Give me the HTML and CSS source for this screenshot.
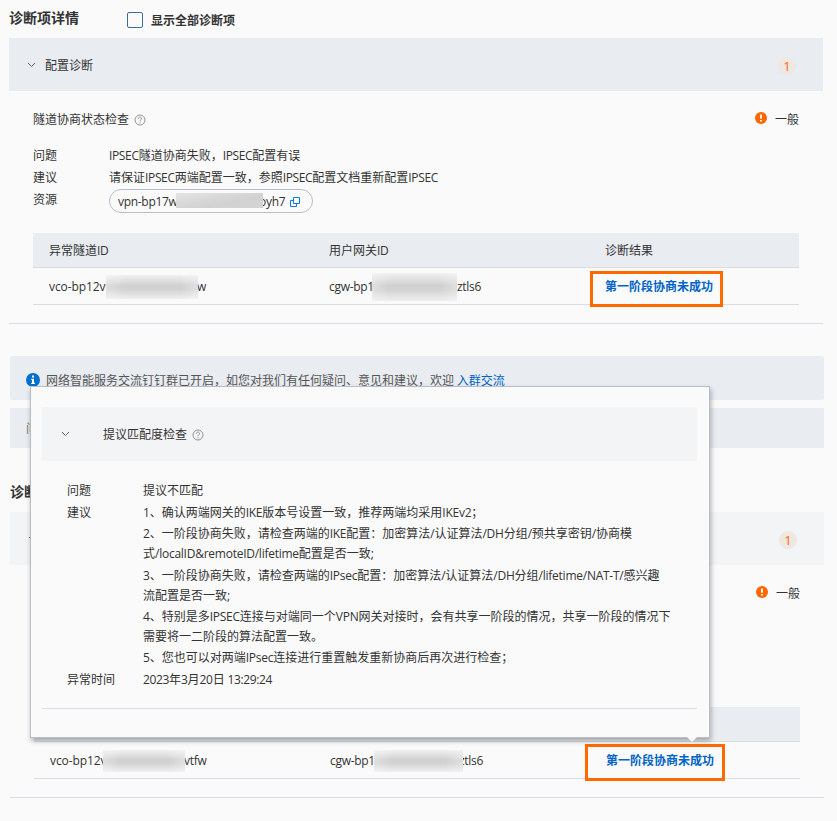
FILE: index.html
```html
<!DOCTYPE html>
<html lang="zh-CN">
<head>
<meta charset="utf-8">
<title>诊断项详情</title>
<link rel="stylesheet" href="styles.css">
</head>
<body>
<main class="page">
  <section class="diagnosis">
    <header class="heading">
      <h2>诊断项详情</h2>
      <label class="toggle"><span class="checkbox"></span>显示全部诊断项</label>
    </header>
    <div class="group-bar">
      <svg class="chevron" viewBox="0 0 9 6"><path d="M1 1l3.5 3.5L8 1"/></svg>
      <span>配置诊断</span>
      <span class="count">1</span>
    </div>
    <div class="check">
      <div class="check-title">
        <span>隧道协商状态检查</span>
        <svg class="help" viewBox="0 0 12 12"><circle cx="6" cy="6" r="5"/><path d="M4.4 4.8C4.4 2.6 7.6 2.6 7.6 4.7C7.6 5.8 6 5.8 6 7.2M6 8.2v1"/></svg>
        <span class="level"><svg class="warn" viewBox="0 0 12 12"><circle cx="6" cy="6" r="6"/><path d="M6 2.4v4.3M6 8v1.6"/></svg>一般</span>
      </div>
      <dl class="facts">
        <dt>问题</dt><dd><i>IPSEC</i>隧道协商失败，<i>IPSEC</i>配置有误</dd>
        <dt>建议</dt><dd>请保证<i>IPSEC</i>两端配置一致，参照<i>IPSEC</i>配置文档重新配置<i>IPSEC</i></dd>
        <dt>资源</dt>
        <dd><span class="pill"><span class="cut vpn">vpn-bp17w</span><span class="mask mask-vpn"></span><span class="tail tail-vpn">oyh7</span><svg class="copy" viewBox="0 0 10 10"><path d="M3.5 .5h6v6h-6zM3.5 3.5h-3v6h6v-3"/></svg></span></dd>
      </dl>
      <div class="table">
        <div class="row head"><span>异常隧道<i>ID</i></span><span>用户网关<i>ID</i></span><span>诊断结果</span></div>
        <div class="row">
          <span class="id"><span class="cut vco">vco-bp12v</span><span class="mask mask-vco"></span><span class="tail tail-vco">w</span></span>
          <span class="id"><span class="cut cgw">cgw-bp1</span><span class="mask mask-cgw"></span><span class="tail">ztls6</span></span>
          <span class="result"><a>第一阶段协商未成功</a><span class="marker"></span></span>
        </div>
      </div>
    </div>
  </section>

  <div class="alert">
    <svg class="info" viewBox="0 0 14 14"><circle cx="7" cy="7" r="7"/><path d="M6 2.6h2v2H6zM5.2 5.8H8v4h.9v1.3H5.2V9.8H6V7h-.8z"/></svg>
    <span>网络智能服务交流钉钉群已开启，如您对我们有任何疑问、意见和建议，欢迎 <a>入群交流</a></span>
  </div>
  <div class="question-bar">问</div>

  <section class="diagnosis second">
    <header class="heading"><h2>诊断</h2></header>
    <div class="group-bar">
      <svg class="chevron" viewBox="0 0 9 6"><path d="M1 1l3.5 3.5L8 1"/></svg>
      <span class="count">1</span>
    </div>
    <div class="check">
      <div class="check-title">
        <span class="level"><svg class="warn" viewBox="0 0 12 12"><circle cx="6" cy="6" r="6"/><path d="M6 2.4v4.3M6 8v1.6"/></svg>一般</span>
      </div>
      <div class="facts"></div>
      <div class="table">
        <div class="row head"></div>
        <div class="row">
          <span class="id"><span class="cut vco">vco-bp12v</span><span class="mask mask-vco"></span><span class="tail tail-vco">vtfw</span></span>
          <span class="id"><span class="cut cgw">cgw-bp1</span><span class="mask mask-cgw"></span><span class="tail tail-cgw">ztls6</span></span>
          <span class="result"><a>第一阶段协商未成功</a><span class="marker"></span></span>
        </div>
      </div>
    </div>
  </section>

  <aside class="popover">
    <div class="popover-title">
      <svg class="chevron" viewBox="0 0 9 6"><path d="M1 1l3.5 3.5L8 1"/></svg>
      <span>提议匹配度检查</span>
      <svg class="help" viewBox="0 0 12 12"><circle cx="6" cy="6" r="5"/><path d="M4.4 4.8C4.4 2.6 7.6 2.6 7.6 4.7C7.6 5.8 6 5.8 6 7.2M6 8.2v1"/></svg>
    </div>
    <dl class="facts">
      <dt>问题</dt><dd>提议不匹配</dd>
      <dt>建议</dt>
      <dd class="advice">
        <p><i>1</i>、确认两端网关的<i>IKE</i>版本号设置一致，推荐两端均采用<i>IKEv2</i>；</p>
        <p><i>2</i>、一阶段协商失败，请检查两端的<i>IKE</i>配置：加密算法<i>/</i>认证算法<i>/DH</i>分组<i>/</i>预共享密钥<i>/</i>协商模<br>式<i>/localID&amp;remoteID/lifetime</i>配置是否一致<i>;</i></p>
        <p><i>3</i>、一阶段协商失败，请检查两端的<i>IPsec</i>配置：加密算法<i>/</i>认证算法<i>/DH</i>分组<i>/lifetime/NAT-T/</i>感兴趣<br>流配置是否一致<i>;</i></p>
        <p><i>4</i>、特别是多<i>IPSEC</i>连接与对端同一个<i>VPN</i>网关对接时，会有共享一阶段的情况，共享一阶段的情况下<br>需要将一二阶段的算法配置一致。</p>
        <p><i>5</i>、您也可以对两端<i>IPsec</i>连接进行重置触发重新协商后再次进行检查；</p>
      </dd>
      <dt>异常时间</dt><dd><i>2023</i>年<i>3</i>月<i>20</i>日<i> 13:29:24</i></dd>
    </dl>
    <svg class="arrow" viewBox="0 0 12 7"><path d="M0 0h12L6 6z"/></svg>
  </aside>
</main>
</body>
</html>
```
FILE: styles.css
```css
* { box-sizing: border-box; }

body {
  margin: 0;
  background: #fafafa;
  color: #333;
  font: 12px/22px "Noto Sans CJK SC", sans-serif;
}

h2, p, dl, dd { margin: 0; }
svg { display: block; flex: none; fill: none; }

i {
  font-family: "Open Sans", sans-serif;
  font-style: normal;
  letter-spacing: -0.35px;
  line-height: 1;
}

a { color: #0064c8; }

.page {
  position: relative;
  height: 821px;
  padding: 0 14px 0 9px;
  overflow: hidden;
}

.diagnosis {
  height: 324px;
  border-bottom: 1px solid #dcdde0;
}

.heading {
  display: flex;
  height: 38px;
}

.heading h2 {
  width: 118px;
  padding-top: 6px;
  font-size: 14px;
  font-weight: 700;
}

.toggle {
  display: flex;
  gap: 8px;
  padding-top: 9px;
  font-weight: 700;
}

.checkbox {
  width: 16px;
  height: 16px;
  margin-top: 3px;
  border: 1px solid #3c6ba0;
  border-radius: 2px;
}

.group-bar {
  display: flex;
  align-items: center;
  height: 53px;
  padding: 1px 27px 0 18px;
  background: #e9ecf1;
}

.chevron {
  width: 9px;
  height: 6px;
  margin-right: 9px;
  stroke: #666;
}

.count {
  width: 18px;
  height: 18px;
  margin: 2px 0 0 auto;
  border-radius: 50%;
  background: #efe7e2;
  color: #f60;
  font: 13px/18px "Open Sans", sans-serif;
  text-align: center;
}

.check { padding: 17px 24px 0; }

.check-title {
  display: flex;
  align-items: center;
  height: 22px;
}

.help {
  width: 12px;
  height: 12px;
  margin: 2px 0 0 5px;
  stroke: #888;
  stroke-width: .9;
}

.level {
  display: flex;
  align-items: center;
  gap: 8px;
  margin-left: auto;
}

.warn { width: 12px; height: 12px; margin-top: -3px; fill: #f60; }
.warn path { stroke: #fff; stroke-width: 1.8; }

.facts {
  display: grid;
  grid-template-columns: 76px 1fr;
  grid-auto-rows: 22px;
  height: 89px;
  margin-top: 14px;
}

.pill {
  display: flex;
  align-items: center;
  width: 204px;
  height: 24px;
  margin-top: 1px;
  padding: 1px 0 0 8px;
  border: 1px solid #b7bdca;
  border-radius: 12px;
}

.cut, .tail {
  font-family: "Open Sans", sans-serif;
  letter-spacing: -0.3px;
  white-space: nowrap;
}

.mask {
  position: relative;
  flex: none;
  background:
    linear-gradient(90deg, rgba(250, 250, 250, .35), transparent 20%, transparent 80%, rgba(250, 250, 250, .35)),
    linear-gradient(#f1f1f1, #d0d0d0 45%, #d2d2d2 60%, #efefef);
}

.vpn { width: 58px; }
.mask-vpn {
  top: -1px;
  width: 87px;
  height: 15px;
  background: linear-gradient(170deg, #e4e4e4, #d2d2d2 60%, #d4d4d4);
}
.tail-vpn { margin-left: -4px; }
.copy { width: 10px; height: 10px; margin: 1px 0 0 5px; stroke: #0a7be8; }
.vco { width: 57px; letter-spacing: -0.1px; }
.mask-vco { width: 92px; height: 24px; }
.tail-vco { margin-left: -1px; }
.cgw { width: 43px; }
.mask-cgw { width: 85px; height: 28px; }

.table { width: 766px; }

.row {
  display: grid;
  grid-template-columns: 280px 276px 1fr;
  align-items: center;
  height: 37px;
  padding: 2px 0 0 16px;
  border-bottom: 1px solid #dcdde0;
}

.row.head {
  height: 35px;
  padding-top: 0;
  background: #e9ecf1;
}

.id {
  display: flex;
  align-items: center;
}

.result { position: relative; font-weight: 700; }
.result a { position: relative; top: -1px; }

.marker {
  position: absolute;
  top: -5px;
  left: -15px;
  width: 133px;
  height: 36px;
  border: 3px solid #ff6a00;
}

.alert {
  display: flex;
  width: 814px;
  height: 44px;
  margin: 32px 0 8px 1px;
  padding: 13px 16px 0;
  border-radius: 2px;
  background: #e9ecf1;
  color: #555;
}

.info { width: 14px; height: 14px; margin: 4px 6px 0 0; fill: #0070cc; }
.info path { fill: #fff; }

.question-bar {
  width: 814px;
  height: 40px;
  margin-left: 1px;
  padding: 9px 16px;
  background: #e9ecf1;
  color: #777;
}

.second {
  width: 814px;
  height: 324px;
  margin: 26px 0 0 1px;
}

.second .group-bar { background: #f3f4f6; }
.second .vco { width: 53px; }
.second .mask-vco { width: 82px; height: 22px; }
.second .cgw { width: 44px; }
.second .mask-cgw { width: 89px; height: 22px; }
.second .tail-cgw { margin-left: -4px; }
.second .marker { top: -6px; left: -21px; width: 140px; height: 37px; }

.popover {
  position: absolute;
  top: 386px;
  left: 30px;
  width: 680px;
  height: 352px;
  padding: 20px 12px 0 11px;
  border: 1px solid #b8bdc7;
  background: #fafafa;
  box-shadow: 1px 3px 5px rgba(0, 0, 0, .3);
}

.popover-title {
  display: flex;
  align-items: center;
  width: 655px;
  height: 54px;
  padding: 0 0 1px 19px;
  background: #f3f4f6;
}

.popover-title .chevron { margin-right: 33px; }

.popover .facts {
  grid-auto-rows: auto;
  align-content: start;
  height: 230px;
  padding-left: 25px;
  margin-top: 18px;
  border-bottom: 1px solid #dcdde0;
}

.advice { height: 167px; padding-top: 1px; }
.advice p { margin-bottom: 1.25px; line-height: 20px; white-space: nowrap; }
.advice i { letter-spacing: -0.25px; }

.arrow {
  position: absolute;
  right: 11px;
  bottom: -6px;
  width: 12px;
  height: 7px;
  fill: #fafafa;
}
```
